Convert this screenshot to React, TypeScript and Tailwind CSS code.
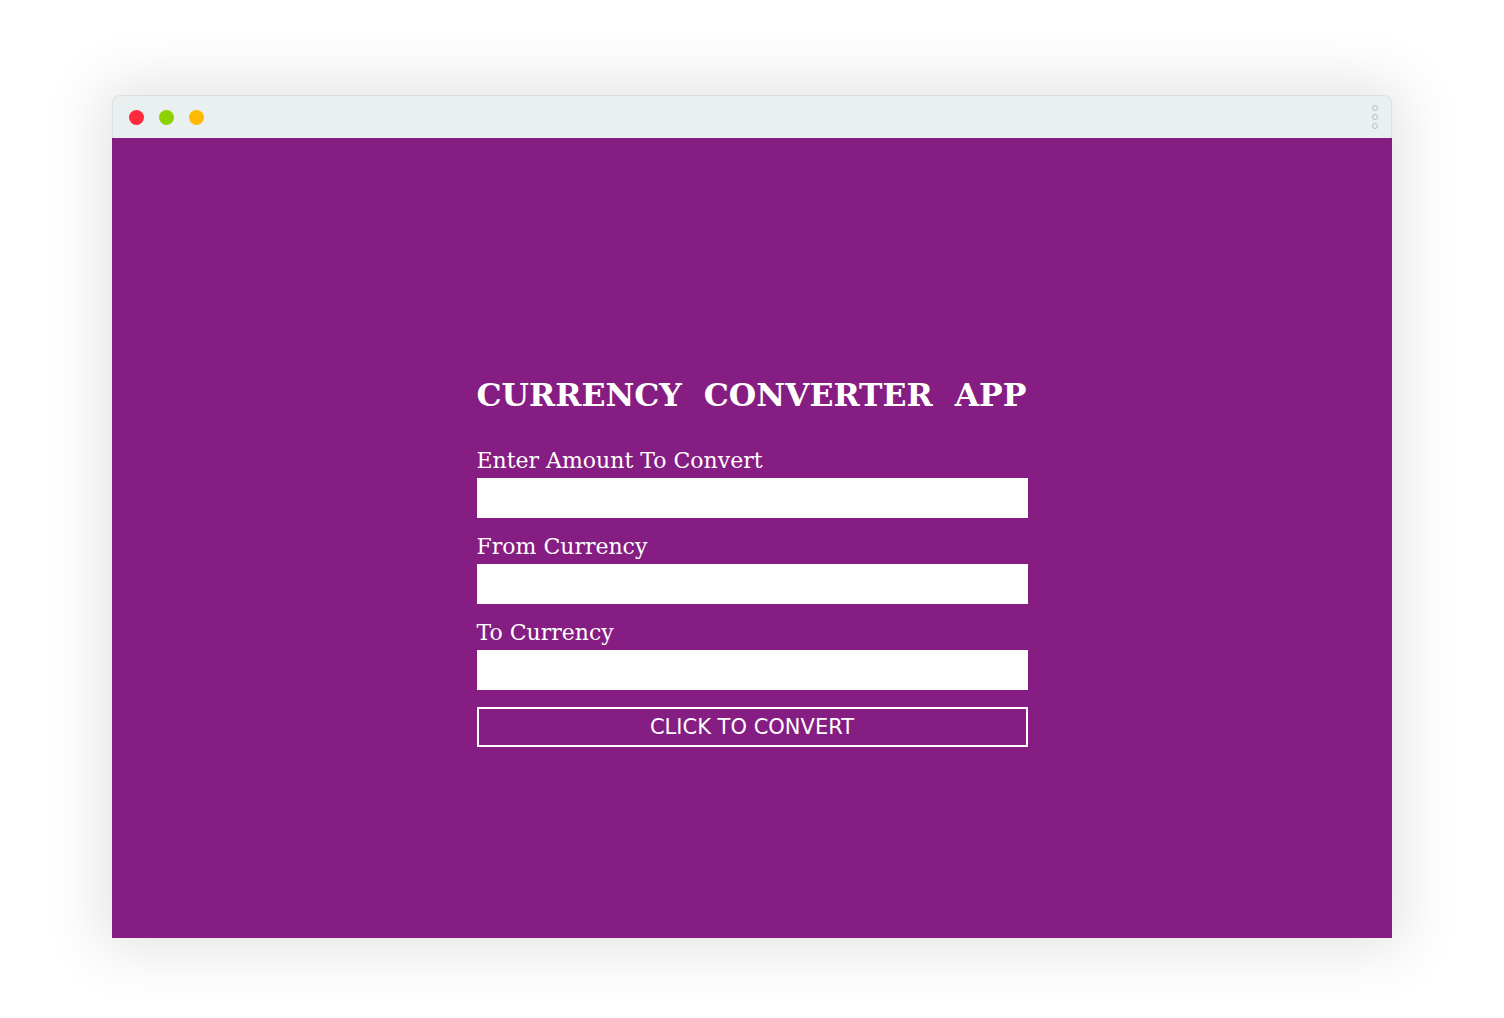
import React from 'react';

export default function App() {
  const fields = ['Enter Amount To Convert', 'From Currency', 'To Currency'];

  return (
    <div className="w-[1504px] h-[1018px] bg-white pt-[95px] pl-[112px] overflow-hidden">
      <div className="w-[1280px] shadow-[0_0_60px_12px_rgba(0,0,0,0.11)] rounded-t-lg">
        {/* Title bar */}
        <div className="h-[43px] bg-[#eaf0f0] border border-b-0 border-[#dcdfdf] rounded-t-lg flex items-center pl-[16px] pr-[13px]">
          <div className="flex gap-[15px]">
            <span className="w-[15px] h-[15px] rounded-full bg-[#ff2a3b]"></span>
            <span className="w-[15px] h-[15px] rounded-full bg-[#8dd200]"></span>
            <span className="w-[15px] h-[15px] rounded-full bg-[#ffb900]"></span>
          </div>
          <div className="ml-auto flex flex-col gap-[3px]">
            <span className="w-[6px] h-[6px] rounded-full border border-[#b8bcbc]"></span>
            <span className="w-[6px] h-[6px] rounded-full border border-[#b8bcbc]"></span>
            <span className="w-[6px] h-[6px] rounded-full border border-[#b8bcbc]"></span>
          </div>
        </div>

        {/* Content */}
        <div className="h-[800px] bg-[#861d83] flex justify-center pt-[237px]">
          <div className="w-[551px] flex flex-col">
            <h1 className="font-['DejaVu_Serif',serif] font-bold text-[31.5px] leading-[40px] text-white whitespace-pre mb-[33px]">
              {'CURRENCY  CONVERTER  APP'}
            </h1>
            {fields.map((f) => (
              <div key={f} className="flex flex-col">
                <label className="font-['DejaVu_Serif',serif] text-[22px] leading-[26px] text-white mb-[4px]">{f}</label>
                <input type="text" className="h-[40px] bg-white outline-none border-0 mb-[16px]" />
              </div>
            ))}
            <button className="h-[40px] mt-[1px] pt-[2px] border-2 border-white text-white font-['DejaVu_Sans',sans-serif] text-[21px] uppercase">
              Click to Convert
            </button>
          </div>
        </div>
      </div>
    </div>
  );
}
